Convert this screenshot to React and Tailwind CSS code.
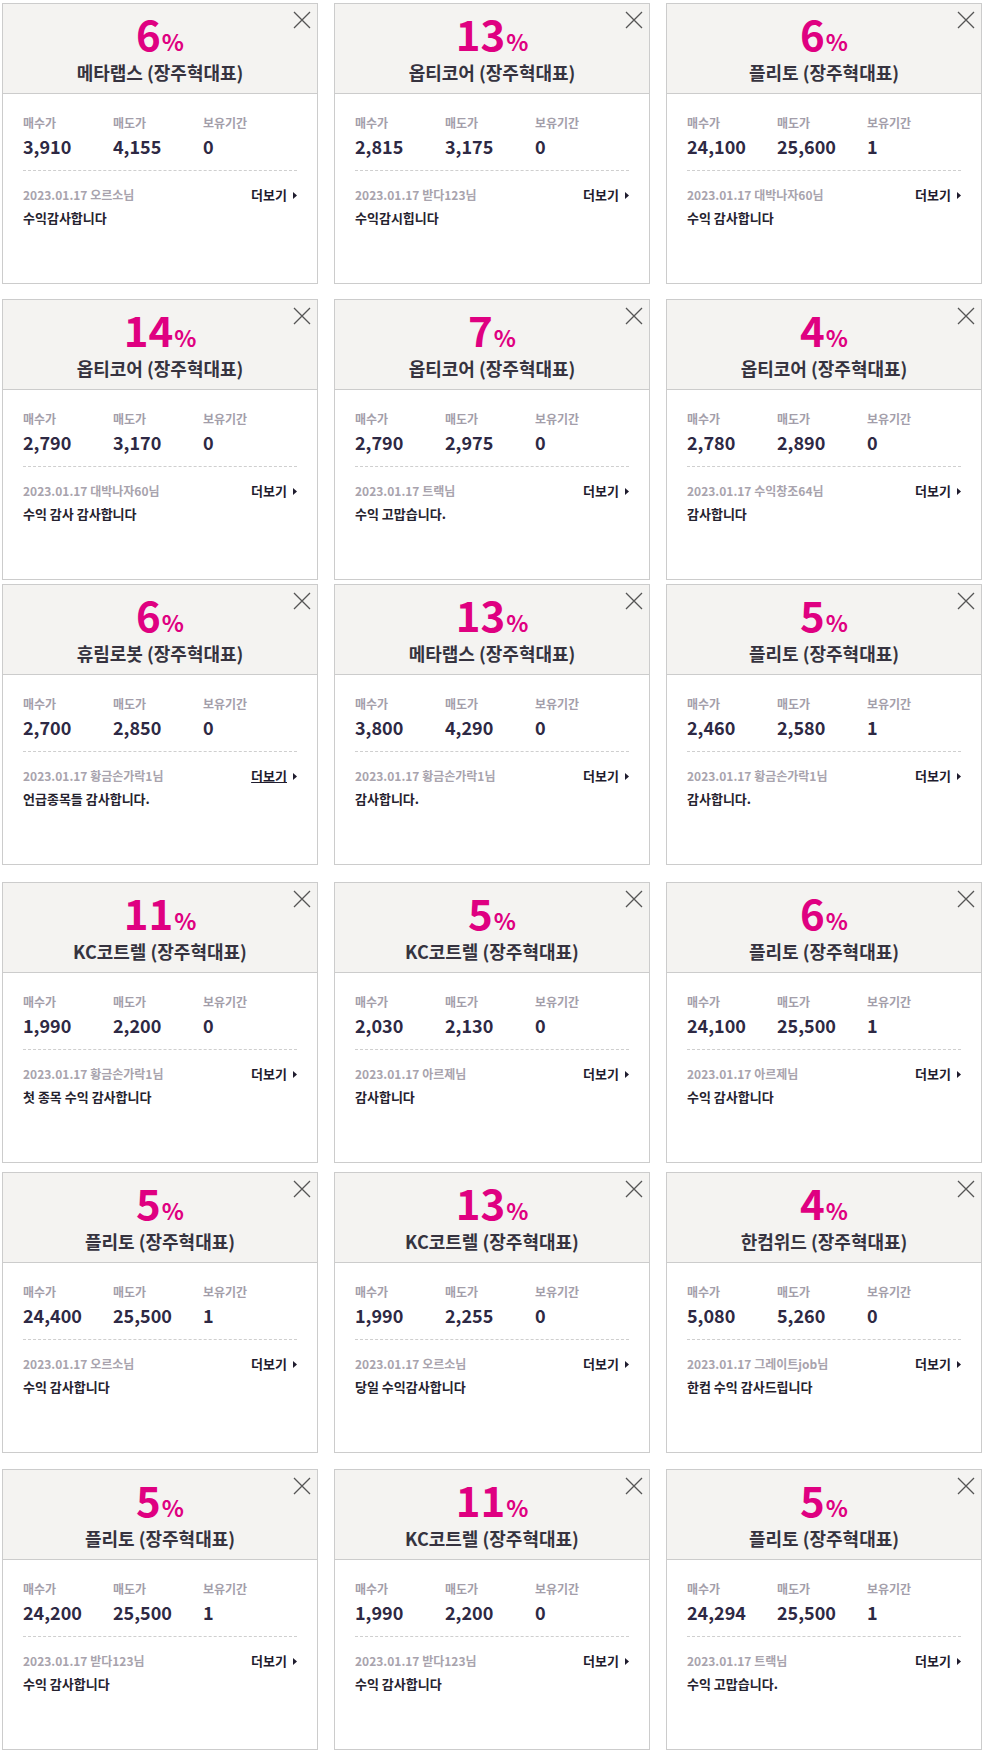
const rows = [
  {
    mt: "mt-[3px]",
    items: [
      { pct: 6, name: "메타랩스", buy: "3,910", sell: "4,155", hold: "0", user: "오르소님", msg: "수익감사합니다" },
      { pct: 13, name: "옵티코어", buy: "2,815", sell: "3,175", hold: "0", user: "받다123님", msg: "수익감시힙니다" },
      { pct: 6, name: "플리토", buy: "24,100", sell: "25,600", hold: "1", user: "대박나자60님", msg: "수익 감사합니다" },
    ],
  },
  {
    mt: "mt-[15px]",
    items: [
      { pct: 14, name: "옵티코어", buy: "2,790", sell: "3,170", hold: "0", user: "대박나자60님", msg: "수익 감사 감사합니다" },
      { pct: 7, name: "옵티코어", buy: "2,790", sell: "2,975", hold: "0", user: "트랙님", msg: "수익 고맙습니다." },
      { pct: 4, name: "옵티코어", buy: "2,780", sell: "2,890", hold: "0", user: "수익창조64님", msg: "감사합니다" },
    ],
  },
  {
    mt: "mt-[4px]",
    items: [
      { pct: 6, name: "휴림로봇", buy: "2,700", sell: "2,850", hold: "0", user: "황금손가락1님", msg: "언급종목들 감사합니다.", hover: true },
      { pct: 13, name: "메타랩스", buy: "3,800", sell: "4,290", hold: "0", user: "황금손가락1님", msg: "감사합니다." },
      { pct: 5, name: "플리토", buy: "2,460", sell: "2,580", hold: "1", user: "황금손가락1님", msg: "감사합니다." },
    ],
  },
  {
    mt: "mt-[17px]",
    items: [
      { pct: 11, name: "KC코트렐", buy: "1,990", sell: "2,200", hold: "0", user: "황금손가락1님", msg: "첫 종목 수익 감사합니다" },
      { pct: 5, name: "KC코트렐", buy: "2,030", sell: "2,130", hold: "0", user: "아르제님", msg: "감사합니다" },
      { pct: 6, name: "플리토", buy: "24,100", sell: "25,500", hold: "1", user: "아르제님", msg: "수익 감사합니다" },
    ],
  },
  {
    mt: "mt-[9px]",
    items: [
      { pct: 5, name: "플리토", buy: "24,400", sell: "25,500", hold: "1", user: "오르소님", msg: "수익 감사합니다" },
      { pct: 13, name: "KC코트렐", buy: "1,990", sell: "2,255", hold: "0", user: "오르소님", msg: "당일 수익감사합니다" },
      { pct: 4, name: "한컴위드", buy: "5,080", sell: "5,260", hold: "0", user: "그레이트job님", msg: "한컴 수익 감사드립니다" },
    ],
  },
  {
    mt: "mt-[16px]",
    items: [
      { pct: 5, name: "플리토", buy: "24,200", sell: "25,500", hold: "1", user: "받다123님", msg: "수익 감사합니다" },
      { pct: 11, name: "KC코트렐", buy: "1,990", sell: "2,200", hold: "0", user: "받다123님", msg: "수익 감사합니다" },
      { pct: 5, name: "플리토", buy: "24,294", sell: "25,500", hold: "1", user: "트랙님", msg: "수익 고맙습니다." },
    ],
  },
];

function CloseIcon() {
  return (
    <svg width="18" height="18" viewBox="0 0 18 18" className="absolute right-[6px] top-[7px]">
      <path d="M1 1 L17 17 M17 1 L1 17" stroke="#555" strokeWidth="1.3" fill="none" />
    </svg>
  );
}

function Stat({ label, value }) {
  return (
    <div className="w-[90px]">
      <p className="text-[12px] leading-[14px] font-bold text-[#a39eaa]">{label}</p>
      <p className="mt-[6px] text-[18px] leading-[20px] font-bold text-[#2e2944]">{value}</p>
    </div>
  );
}

function Card({ item }) {
  return (
    <div className="relative h-[281px] border border-[#cccccc] bg-white">
      <CloseIcon />
      <div className="h-[90px] border-b border-[#cccccc] bg-[#f4f3f1] flex flex-col items-center">
        <p className="mt-[7px] h-[44px] flex items-baseline text-[#df0081] font-bold">
          <span className="text-[42px] leading-[44px]">{item.pct}</span>
          <span className="text-[23px] leading-[24px] ml-[1px]">%</span>
        </p>
        <p className="mt-[6px] text-[18px] leading-[22px] font-bold text-[#36333f]">
          {item.name} (장주혁대표)
        </p>
      </div>
      <div className="px-[20px] pt-[22px]">
        <div className="flex">
          <Stat label="매수가" value={item.buy} />
          <Stat label="매도가" value={item.sell} />
          <Stat label="보유기간" value={item.hold} />
        </div>
        <div className="mt-[14px] border-t border-dashed border-[#cfcfcf]" />
        <div className="mt-[16px] flex items-center justify-between">
          <p className="text-[12px] leading-[16px] font-bold text-[#a8a3ad]">2023.01.17 {item.user}</p>
          <p className="flex items-center gap-[6px] text-[13px] leading-[16px] font-bold text-[#1f1c2e]">
            <span className={item.hover ? "underline" : ""}>더보기</span>
            <svg width="4" height="7" viewBox="0 0 4 7">
              <path d="M0 0 L4 3.5 L0 7 Z" fill="#1f1c2e" />
            </svg>
          </p>
        </div>
        <p className="mt-[6px] text-[13px] leading-[18px] font-bold text-[#25222e]">{item.msg}</p>
      </div>
    </div>
  );
}

export default function App() {
  return (
    <div
      className="w-[985px] px-[2px] bg-white"
      style={{ fontFamily: '"Noto Sans CJK KR", "Noto Sans", sans-serif' }}
    >
      {rows.map((row, i) => (
        <div key={i} className={`grid grid-cols-[316px_316px_316px] gap-x-[16px] ${row.mt}`}>
          {row.items.map((item, j) => (
            <Card key={j} item={item} />
          ))}
        </div>
      ))}
    </div>
  );
}
